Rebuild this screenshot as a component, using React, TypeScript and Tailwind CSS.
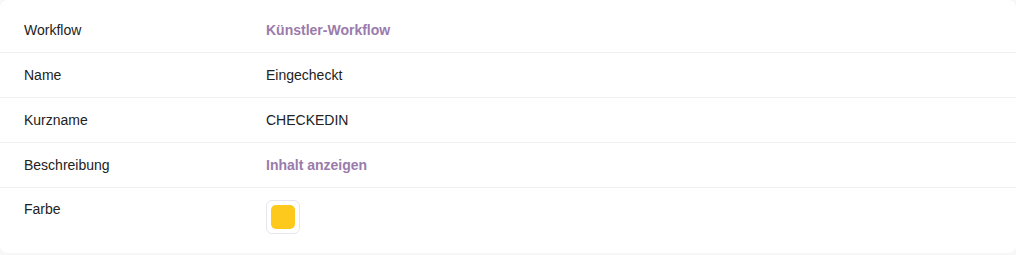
const rows = [
  { label: "Workflow", value: "Künstler-Workflow", link: true },
  { label: "Name", value: "Eingecheckt" },
  { label: "Kurzname", value: "CHECKEDIN" },
  { label: "Beschreibung", value: "Inhalt anzeigen", link: true },
];

export default function App() {
  return (
    <div className="w-[1016px] h-[255px] bg-[#f7f7f8] font-['Liberation_Sans',Arial,sans-serif]">
      <div className="h-[253px] bg-white rounded-lg pt-[8px]">
        {rows.map((r) => (
          <div
            key={r.label}
            className="flex h-[45px] items-center border-b border-[#f0f0f4] text-[14px] leading-5"
          >
            <div className="w-[266px] pl-6 -mt-px text-[#222]">{r.label}</div>
            <div
              className={
                "-mt-px " + (r.link ? "font-bold text-[#9a7bab]" : "text-[#222]")
              }
            >
              {r.value}
            </div>
          </div>
        ))}
        <div className="flex pt-[11px] text-[14px] leading-5">
          <div className="w-[266px] pl-6 text-[#222]">Farbe</div>
          <div className="mt-px w-[34px] h-[34px] rounded-md border border-[#e6e6ee] p-[4px]">
            <div className="w-full h-full rounded-[5px] bg-[#fcc91c]" />
          </div>
        </div>
      </div>
    </div>
  );
}
